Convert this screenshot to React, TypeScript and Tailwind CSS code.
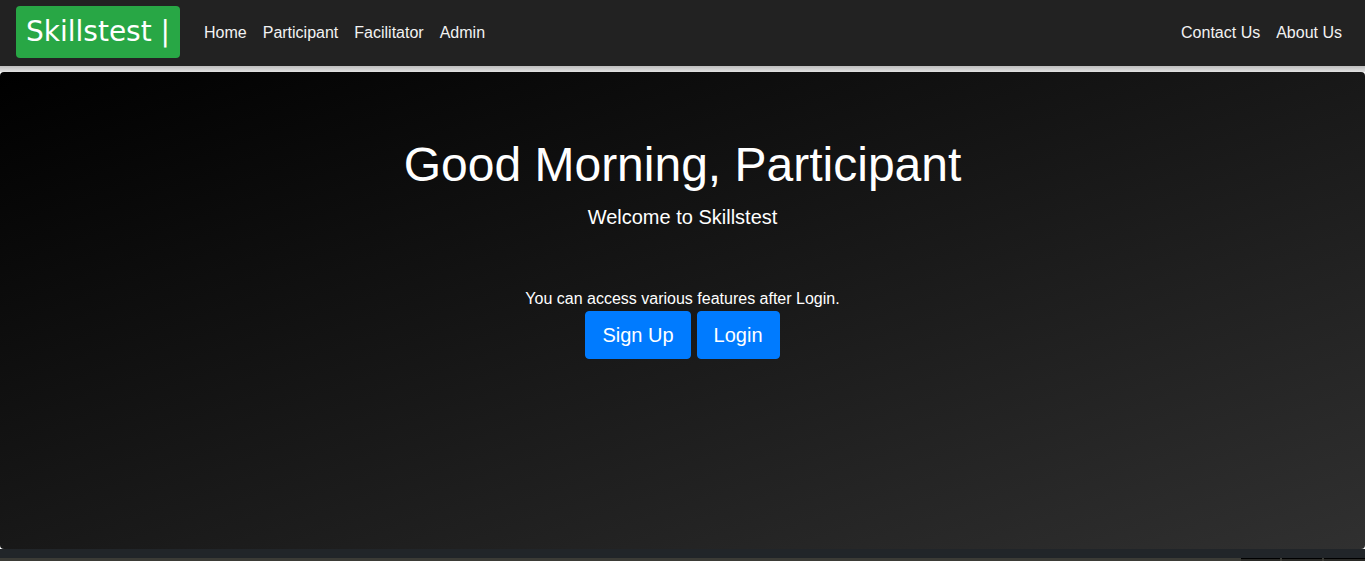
import React from 'react';

export default function App() {
    const leftLinks = ['Home', 'Participant', 'Facilitator', 'Admin'];
    const rightLinks = ['Contact Us', 'About Us'];

    return (
        <div className="min-h-[561px] bg-white font-['Liberation_Sans',Arial,sans-serif]">
            {/* Navbar */}
            <nav className="h-[66px] bg-[#222222] flex items-center justify-between pl-4 pr-[15px]">
                <div className="flex items-center">
                    <a className="h-[52px] mb-0.5 px-[10px] flex items-center bg-[#28a745] rounded text-white text-[28px] font-['DejaVu_Sans',sans-serif]">
                        Skillstest |
                    </a>
                    <ul className="flex items-center ml-4">
                        {leftLinks.map((label) => (
                            <li key={label}>
                                <a className="block px-2 text-base text-[#f2f2f2]">{label}</a>
                            </li>
                        ))}
                    </ul>
                </div>
                <ul className="flex items-center">
                    {rightLinks.map((label) => (
                        <li key={label}>
                            <a className="block px-2 text-base text-[#f2f2f2]">{label}</a>
                        </li>
                    ))}
                </ul>
            </nav>
            <div className="h-[6px] bg-gradient-to-b from-[#bdbdbd] to-[#e2e2e2]" />

            {/* Jumbotron */}
            <section className="h-[477px] rounded bg-[linear-gradient(to_bottom_right,#000000,#303030)] pt-[64px] px-8 text-center text-white">
                <h1 className="text-[48px] leading-[1.2] mb-2">Good Morning, Participant</h1>
                <p className="text-[20px] leading-[30px]">Welcome to Skillstest</p>
                <p className="mt-[55px] text-base leading-6">You can access various features after Login.</p>
                <div className="flex justify-center gap-[6px]">
                    <button className="h-12 px-4 border border-[#007bff] bg-[#007bff] rounded text-[20px] text-white">Sign Up</button>
                    <button className="h-12 px-4 border border-[#007bff] bg-[#007bff] rounded text-[20px] text-white">Login</button>
                </div>
            </section>

            {/* Footer */}
            <footer>
                <div className="h-[9px] bg-[#212529]" />
                <div className="h-[3px] bg-[#3b3b36] flex justify-end gap-[2px]">
                    <div className="w-[39px] border-t border-black bg-[#2a2a27]" />
                    <div className="w-[40px] border-t border-black bg-[#2a2a27]" />
                    <div className="w-[41px] border-t border-black bg-[#2a2a27]" />
                </div>
            </footer>
        </div>
    );
}
